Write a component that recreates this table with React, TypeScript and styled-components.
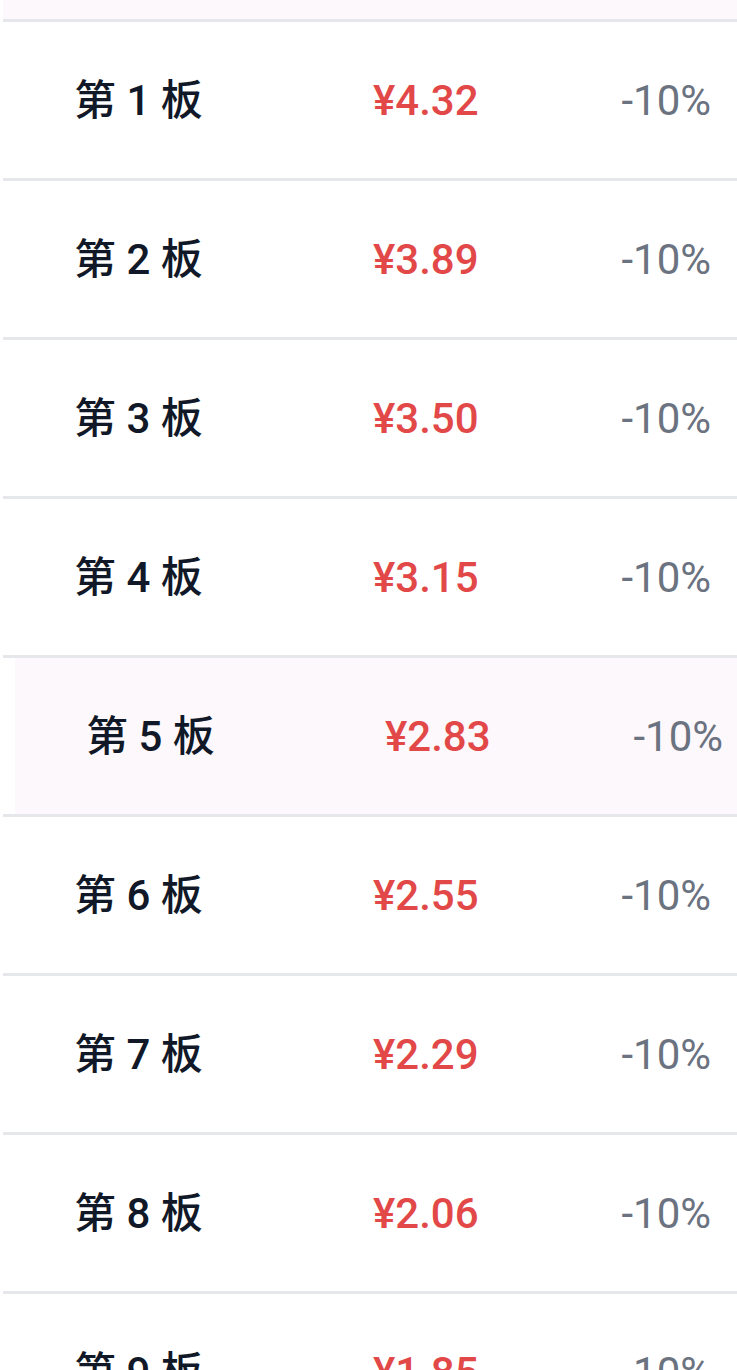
import styled, { createGlobalStyle } from "styled-components";

const GlobalStyle = createGlobalStyle`
    html, body {
        margin: 0;
        padding: 0;
        background: #ffffff;
        overflow: hidden;
    }
    body {
        font-family: Roboto, "Noto Sans CJK SC", sans-serif;
    }
`;

const boards = [
    { no: 1, price: "4.32" },
    { no: 2, price: "3.89" },
    { no: 3, price: "3.50" },
    { no: 4, price: "3.15" },
    { no: 5, price: "2.83", active: true },
    { no: 6, price: "2.55" },
    { no: 7, price: "2.29" },
    { no: 8, price: "2.06" },
    { no: 9, price: "1.85" },
];

const App = () => {
    return (
        <>
            <GlobalStyle />
            <ListLayout>
                <TopStrip />
                {boards.map((b) => (
                    <Row key={b.no}>
                        <RowInner $active={b.active}>
                            <Label>第 {b.no} 板</Label>
                            <Price>¥{b.price}</Price>
                            <Change>-10%</Change>
                        </RowInner>
                    </Row>
                ))}
            </ListLayout>
        </>
    );
};

const ListLayout = styled.div`
    display: flex;
    flex-direction: column;
    margin-left: 3px;
    width: calc(100vw - 3px);
`;

const TopStrip = styled.div`
    height: 19px;
    background-color: #fdf8fc;
    border-bottom: 3px solid #e5e7eb;
`;

const Row = styled.div`
    border-bottom: 3px solid #e5e7eb;
    overflow: hidden;
`;

const RowInner = styled.div<{ $active?: boolean }>`
    height: 156px;
    display: grid;
    grid-template-columns: 299px 1fr auto;
    align-items: center;
    padding: 0 26px 0 71px;
    background-color: ${(p) => (p.$active ? "#fdf8fc" : "#ffffff")};
    transform: ${(p) => (p.$active ? "translateX(12px)" : "none")};
`;

const Label = styled.div`
    font-family: Roboto, "Noto Sans CJK SC", sans-serif;
    font-size: 42px;
    font-weight: 500;
    color: #111827;
    margin-bottom: 8px;
`;

const Price = styled.div`
    font-size: 42px;
    font-weight: 500;
    color: #e24848;
`;

const Change = styled.div`
    font-size: 42px;
    font-weight: 400;
    color: #6b7280;
`;

export default App;
